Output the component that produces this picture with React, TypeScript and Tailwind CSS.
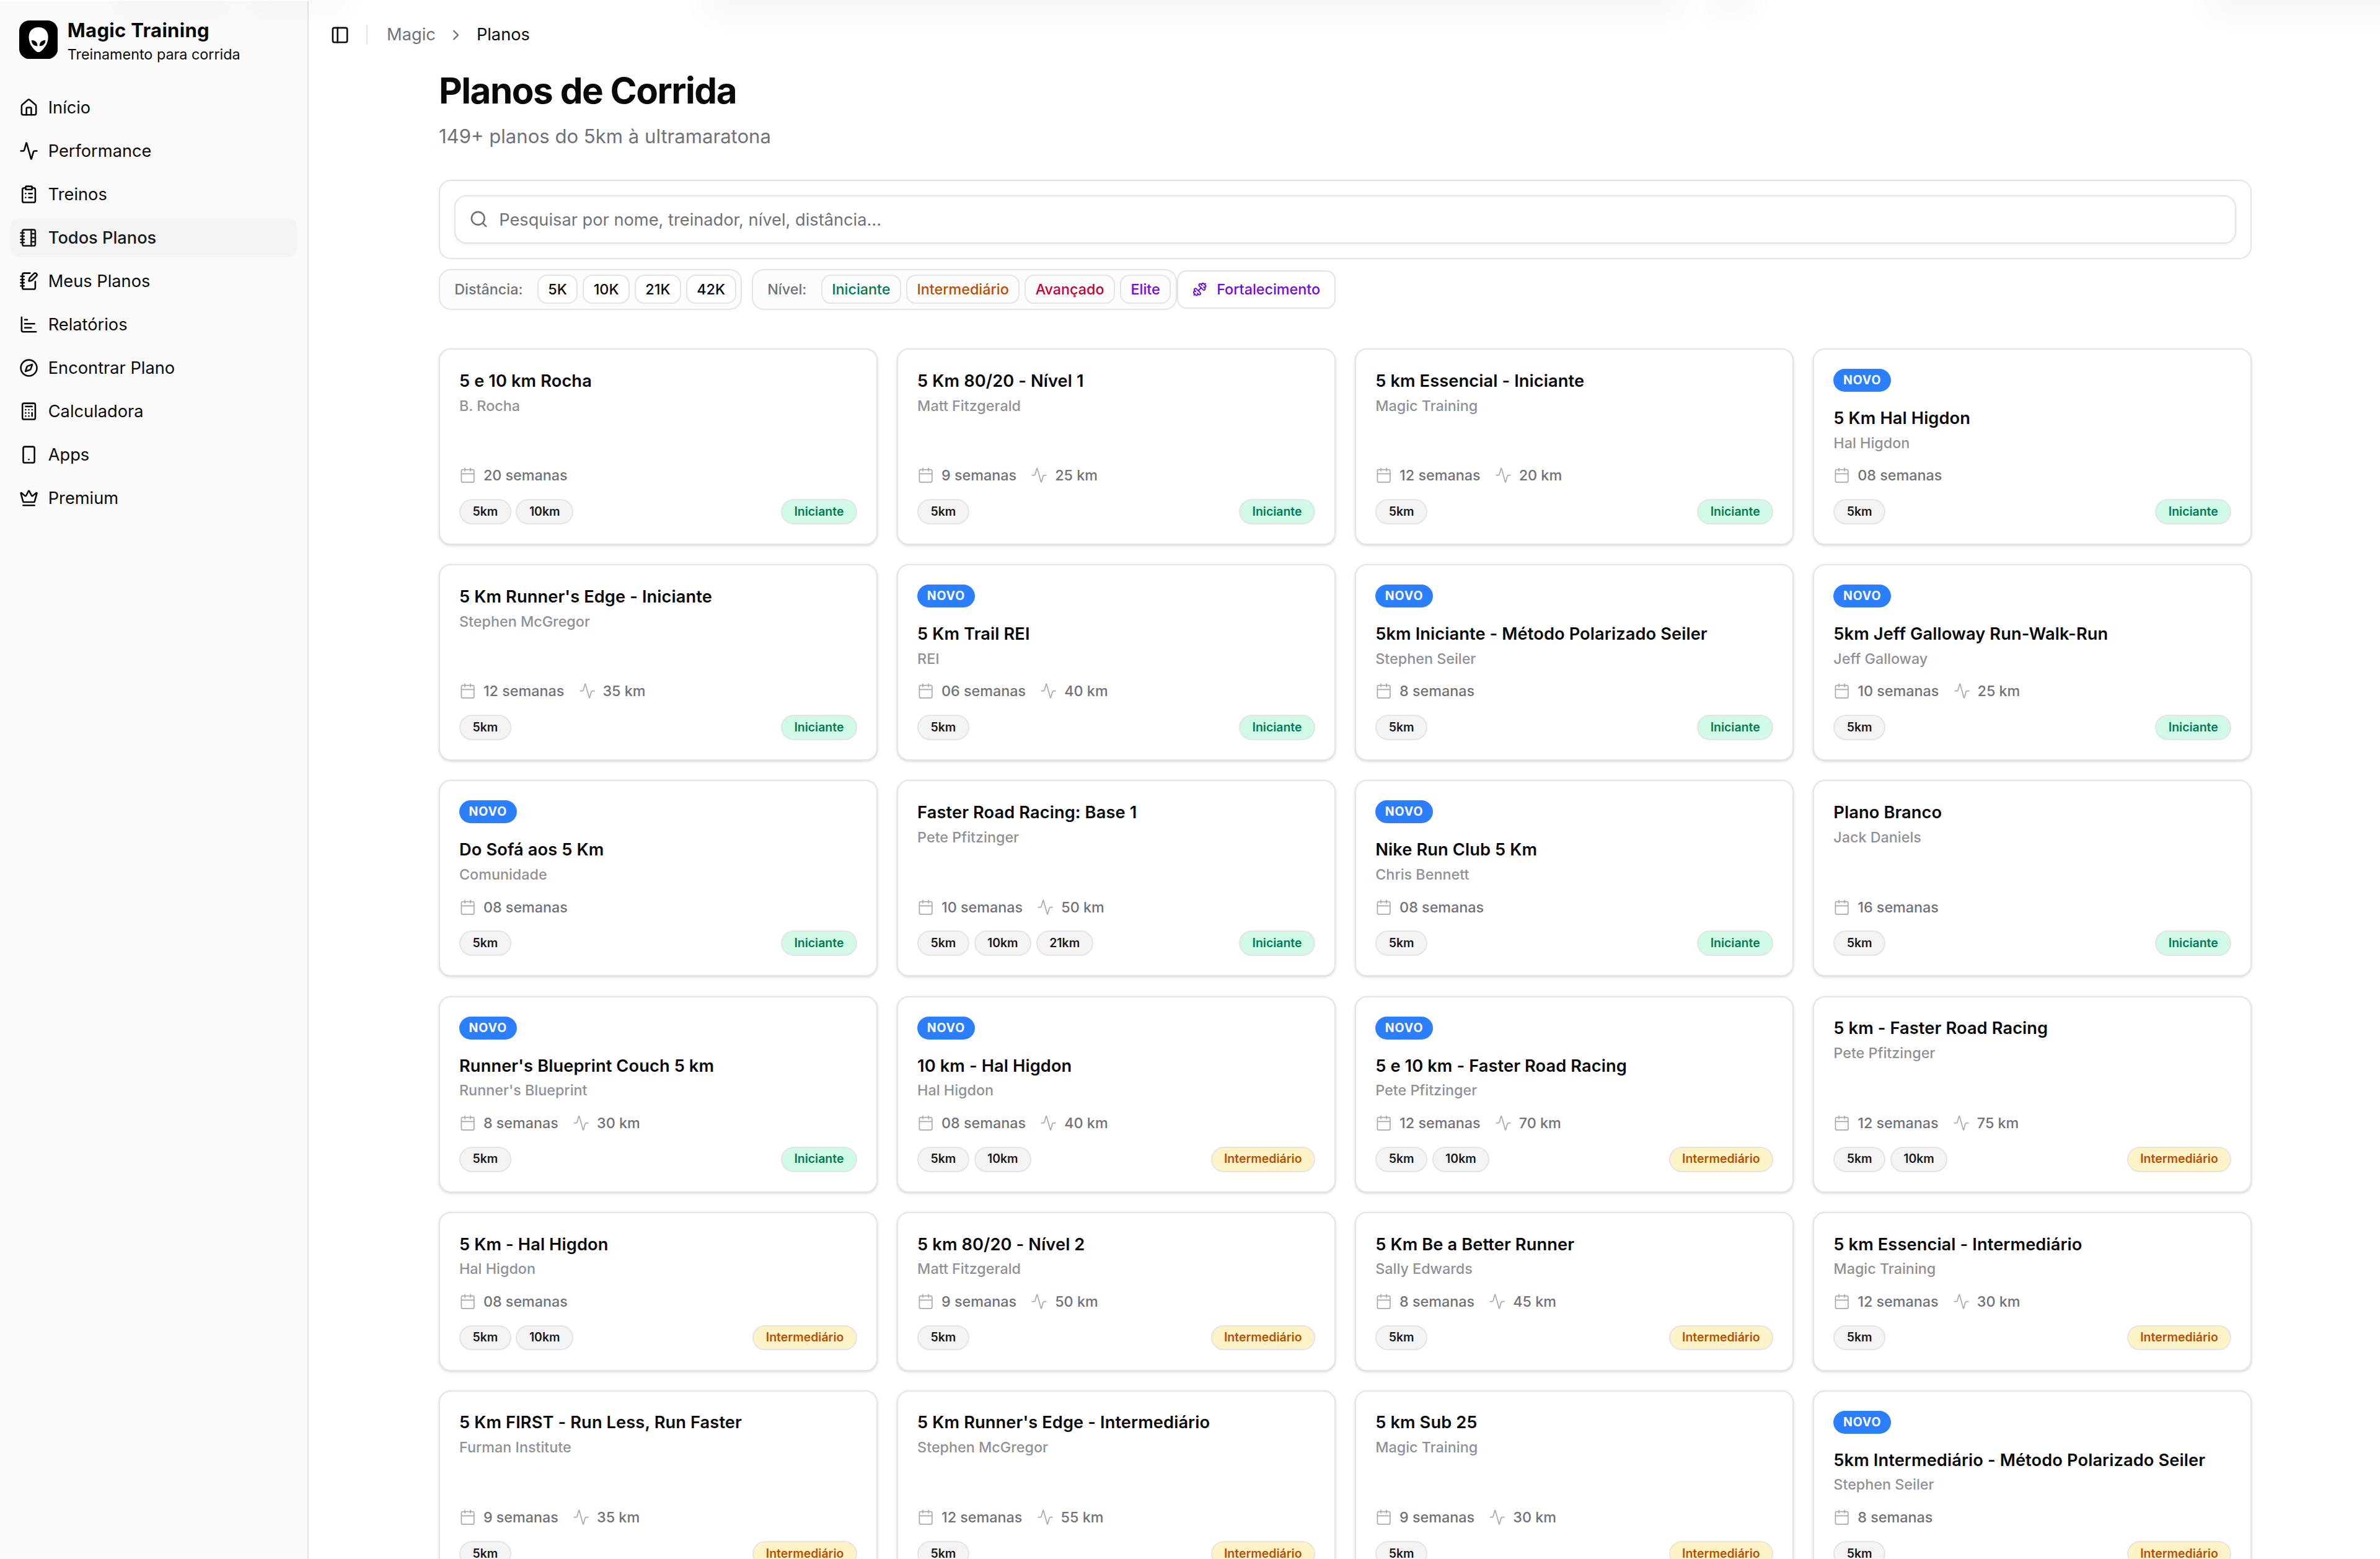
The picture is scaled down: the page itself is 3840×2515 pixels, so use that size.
import React from "react";
import {
    Activity,
    Calculator,
    Calendar,
    ChartBar,
    ChevronRight,
    ClipboardList,
    Compass,
    Crown,
    Dumbbell,
    House,
    NotebookPen,
    NotebookTabs,
    PanelLeft,
    Search,
    Smartphone
} from "lucide-react";
import clsx from "clsx";

type Level = "Iniciante" | "Intermediário";

interface Plan {
    title: string;
    coach: string;
    weeks: string;
    km?: number;
    distances: string[];
    level: Level;
    isNew?: boolean;
}

const NAV_ITEMS = [
    { icon: House, label: "Início" },
    { icon: Activity, label: "Performance" },
    { icon: ClipboardList, label: "Treinos" },
    { icon: NotebookTabs, label: "Todos Planos", active: true },
    { icon: NotebookPen, label: "Meus Planos" },
    { icon: ChartBar, label: "Relatórios" },
    { icon: Compass, label: "Encontrar Plano" },
    { icon: Calculator, label: "Calculadora" },
    { icon: Smartphone, label: "Apps" },
    { icon: Crown, label: "Premium" }
];

const DISTANCE_FILTERS = ["5K", "10K", "21K", "42K"];

const LEVEL_FILTERS = [
    { label: "Iniciante", color: "text-[#007a55]" },
    { label: "Intermediário", color: "text-[#bb4d00]" },
    { label: "Avançado", color: "text-[#c70036]" },
    { label: "Elite", color: "text-[#7008e7]" }
];

const LEVEL_STYLES: Record<Level, string> = {
    "Iniciante": "bg-[#d0fae5] text-[#007a55]",
    "Intermediário": "bg-[#fef3c6] text-[#bb4d00]"
};

const PLANS: Plan[] = [
    { title: "5 e 10 km Rocha", coach: "B. Rocha", weeks: "20", distances: ["5km", "10km"], level: "Iniciante" },
    { title: "5 Km 80/20 - Nível 1", coach: "Matt Fitzgerald", weeks: "9", km: 25, distances: ["5km"], level: "Iniciante" },
    { title: "5 km Essencial - Iniciante", coach: "Magic Training", weeks: "12", km: 20, distances: ["5km"], level: "Iniciante" },
    { title: "5 Km Hal Higdon", coach: "Hal Higdon", weeks: "08", distances: ["5km"], level: "Iniciante", isNew: true },

    { title: "5 Km Runner's Edge - Iniciante", coach: "Stephen McGregor", weeks: "12", km: 35, distances: ["5km"], level: "Iniciante" },
    { title: "5 Km Trail REI", coach: "REI", weeks: "06", km: 40, distances: ["5km"], level: "Iniciante", isNew: true },
    { title: "5km Iniciante - Método Polarizado Seiler", coach: "Stephen Seiler", weeks: "8", distances: ["5km"], level: "Iniciante", isNew: true },
    { title: "5km Jeff Galloway Run-Walk-Run", coach: "Jeff Galloway", weeks: "10", km: 25, distances: ["5km"], level: "Iniciante", isNew: true },

    { title: "Do Sofá aos 5 Km", coach: "Comunidade", weeks: "08", distances: ["5km"], level: "Iniciante", isNew: true },
    { title: "Faster Road Racing: Base 1", coach: "Pete Pfitzinger", weeks: "10", km: 50, distances: ["5km", "10km", "21km"], level: "Iniciante" },
    { title: "Nike Run Club 5 Km", coach: "Chris Bennett", weeks: "08", distances: ["5km"], level: "Iniciante", isNew: true },
    { title: "Plano Branco", coach: "Jack Daniels", weeks: "16", distances: ["5km"], level: "Iniciante" },

    { title: "Runner's Blueprint Couch 5 km", coach: "Runner's Blueprint", weeks: "8", km: 30, distances: ["5km"], level: "Iniciante", isNew: true },
    { title: "10 km - Hal Higdon", coach: "Hal Higdon", weeks: "08", km: 40, distances: ["5km", "10km"], level: "Intermediário", isNew: true },
    { title: "5 e 10 km - Faster Road Racing", coach: "Pete Pfitzinger", weeks: "12", km: 70, distances: ["5km", "10km"], level: "Intermediário", isNew: true },
    { title: "5 km - Faster Road Racing", coach: "Pete Pfitzinger", weeks: "12", km: 75, distances: ["5km", "10km"], level: "Intermediário" },

    { title: "5 Km - Hal Higdon", coach: "Hal Higdon", weeks: "08", distances: ["5km", "10km"], level: "Intermediário" },
    { title: "5 km 80/20 - Nível 2", coach: "Matt Fitzgerald", weeks: "9", km: 50, distances: ["5km"], level: "Intermediário" },
    { title: "5 Km Be a Better Runner", coach: "Sally Edwards", weeks: "8", km: 45, distances: ["5km"], level: "Intermediário" },
    { title: "5 km Essencial - Intermediário", coach: "Magic Training", weeks: "12", km: 30, distances: ["5km"], level: "Intermediário" },

    { title: "5 Km FIRST - Run Less, Run Faster", coach: "Furman Institute", weeks: "9", km: 35, distances: ["5km"], level: "Intermediário" },
    { title: "5 Km Runner's Edge - Intermediário", coach: "Stephen McGregor", weeks: "12", km: 55, distances: ["5km"], level: "Intermediário" },
    { title: "5 km Sub 25", coach: "Magic Training", weeks: "9", km: 30, distances: ["5km"], level: "Intermediário" },
    { title: "5km Intermediário - Método Polarizado Seiler", coach: "Stephen Seiler", weeks: "8", distances: ["5km"], level: "Intermediário", isNew: true }
];

export default function App() {
    return (
        <div className="relative flex w-[1975px] h-[1293.5px] overflow-hidden bg-white pt-px text-[#09090b] antialiased font-['Inter',sans-serif] [zoom:1.9443]">
            <Sidebar />

            <main className="flex-1 min-w-0">
                <TopBar />

                <div className="ml-[108.1px] w-[1504.6px]">
                    <h1 className="text-3xl font-bold tracking-tight">Planos de Corrida</h1>
                    <p className="pt-[9px] text-base leading-[23px] text-[#71717a]">149+ planos do 5km à ultramaratona</p>

                    {/* Search */}
                    <div className="mt-6 rounded-[10px] border-[1.05px] border-[#e4e4e7] p-3">
                        <div className="flex h-10 items-center gap-[9px] rounded-[10px] border-[1.05px] border-[#e4e4e7] bg-white px-[11px] shadow-[0_1px_3px_rgba(0,0,0,0.06)]">
                            <Search className="size-4 text-[#71717a]" />
                            <span className="pt-0.5 text-sm text-[#71717a]">Pesquisar por nome, treinador, nível, distância...</span>
                        </div>
                    </div>

                    <Filters />

                    <div className="mt-8 grid grid-cols-4 gap-4">
                        {PLANS.map((plan) => (
                            <PlanCard key={plan.title} plan={plan} />
                        ))}
                    </div>
                </div>
            </main>

            <TopShade />
        </div>
    );
}

function Sidebar() {
    return (
        <aside className="w-64 shrink-0 border-r-[1.05px] border-[#e4e4e7] bg-[#fafafa] p-2">
            <div className="flex h-12 items-center gap-2 px-2">
                <Logo />
                <div className="flex flex-col pt-[1.5px] whitespace-nowrap">
                    <span className="text-base leading-[22.5px] font-bold tracking-[0.009em]">Magic Training</span>
                    <span className="text-xs">Treinamento para corrida</span>
                </div>
            </div>

            <nav className="mt-[16.3px] flex flex-col gap-1">
                {NAV_ITEMS.map(({ icon: Icon, label, active }) => (
                    <a
                        key={label}
                        className={clsx(
                            "flex h-8 items-center gap-2 rounded-lg px-2 text-sm",
                            active && "bg-[#f4f4f5] font-medium text-[#18181b]"
                        )}
                    >
                        <Icon className="size-4" />
                        <span className="pt-px">{label}</span>
                    </a>
                ))}
            </nav>
        </aside>
    );
}

function Logo() {
    return (
        <svg viewBox="0 0 32 32" className="size-8 shrink-0">
            <rect width="32" height="32" rx="8.5" fill="#000" />
            <path
                d="M16 5.7C11.2 5.7 8 8.9 8 13.9c0 4.6 2.4 8.2 4.7 10.5 1.2 1.2 2.3 1.9 3.3 1.9s2.1-.7 3.3-1.9c2.3-2.3 4.7-5.9 4.7-10.5 0-5-3.2-8.2-8-8.2Z"
                fill="#fff"
            />
            <path d="M10.2 16.6c2.6-.5 5 1.5 5 4.6-2.6.3-5-1.6-5-4.6Z" fill="#000" />
            <path d="M21.8 16.6c-2.6-.5-5 1.5-5 4.6 2.6.3 5-1.6 5-4.6Z" fill="#000" />
        </svg>
    );
}

function TopBar() {
    return (
        <header className="flex h-14 items-center gap-2 px-4">
            <button className="-ml-1 flex size-7 items-center justify-center" aria-label="Toggle Sidebar">
                <PanelLeft className="size-4" />
            </button>
            <div className="mr-2 h-4 w-px bg-[#e4e4e7]" />
            <nav className="flex items-center gap-2.5 pt-[0.5px] text-sm">
                <span className="text-[#71717a]">Magic</span>
                <ChevronRight className="size-3.5 text-[#71717a]" />
                <span>Planos</span>
            </nav>
        </header>
    );
}

function Filters() {
    return (
        <div className="mt-2 flex items-center text-xs font-medium">
            <div className="mr-2 flex items-center gap-1 rounded-[10px] border-[1.05px] border-[#e4e4e7] bg-[#fcfcfc] p-1">
                <span className="px-2 text-[#71717a]">Distância:</span>
                {DISTANCE_FILTERS.map((label) => (
                    <button key={label} className="h-6 rounded-lg border-[1.05px] border-[#e4e4e7] bg-white px-2">
                        {label}
                    </button>
                ))}
            </div>

            <div className="flex items-center gap-1 rounded-[10px] border-[1.05px] border-[#e4e4e7] bg-[#fcfcfc] p-1">
                <span className="px-2 text-[#71717a]">Nível:</span>
                {LEVEL_FILTERS.map(({ label, color }) => (
                    <button key={label} className={clsx("h-6 rounded-lg border-[1.05px] border-[#e4e4e7] px-2", color)}>
                        {label}
                    </button>
                ))}
            </div>

            <button className="flex h-8 items-center gap-2 rounded-lg border-[1.05px] border-[#e4e4e7] bg-white px-3 text-[#7008e7]">
                <Dumbbell className="size-3" />
                Fortalecimento
            </button>
        </div>
    );
}

function PlanCard({ plan }: { plan: Plan }) {
    return (
        <article className="flex flex-col rounded-[10px] border-[1.05px] border-[#e4e4e7] bg-white p-4 shadow-sm">
            {plan.isNew && (
                <span className="mb-3 self-start rounded-full bg-[#2b7fff] px-2 py-0.5 text-[10px] leading-[15px] font-bold tracking-wider text-white">
                    NOVO
                </span>
            )}
            <h3 className="pt-[0.4px] text-sm leading-snug font-semibold tracking-[0.004em]">{plan.title}</h3>
            <p className="mt-[2.7px] text-xs font-medium text-[#71717a]/80">{plan.coach}</p>

            <div className="mt-auto pt-[11px]">
                <div className="mb-[11.7px] flex items-center gap-3 text-xs font-medium text-[#71717a]">
                    <span className="flex items-center gap-1.5">
                        <Calendar className="size-3.5 opacity-60" strokeWidth={1.5} />
                        {plan.weeks} semanas
                    </span>
                    {plan.km && (
                        <span className="flex items-center gap-1.5">
                            <Activity className="size-3.5 opacity-60" strokeWidth={1.5} />
                            {plan.km} km
                        </span>
                    )}
                </div>

                <div className="flex items-center justify-between">
                    <div className="flex gap-1">
                        {plan.distances.map((distance) => (
                            <Pill key={distance} className="bg-[#f4f4f5] text-[#18181b]">{distance}</Pill>
                        ))}
                    </div>
                    <Pill className={LEVEL_STYLES[plan.level]}>{plan.level}</Pill>
                </div>
            </div>
        </article>
    );
}

function Pill({ className, children }: { className: string, children: React.ReactNode }) {
    return (
        <span className={clsx("rounded-full border-[1.05px] border-[#e4e4e7] px-2.5 py-0.5 text-[10px] leading-[15px] font-semibold", className)}>
            {children}
        </span>
    );
}

// Soft shade cast on the page by whatever floats above its top edge
function TopShade() {
    return (
        <div className="pointer-events-none absolute inset-x-0 top-0 h-10 overflow-hidden">
            <div className="absolute -top-5 left-[94px] h-5 w-[96px] shadow-[0_10px_22px_rgba(20,30,30,0.03)]" />
            <div className="absolute -top-5 left-[206px] h-5 w-[82px] shadow-[0_10px_22px_rgba(20,30,30,0.03)]" />
            <div className="absolute -top-5 left-[584px] h-5 w-[814px] shadow-[0_12px_22px_rgba(20,30,30,0.045)]" />
            <div className="absolute -top-5 left-[1416px] h-5 w-[40px] shadow-[0_12px_22px_rgba(20,30,30,0.04)]" />
            <div className="absolute -top-5 left-[1832px] h-5 w-[190px] shadow-[0_12px_22px_rgba(20,30,30,0.045)]" />
        </div>
    );
}
